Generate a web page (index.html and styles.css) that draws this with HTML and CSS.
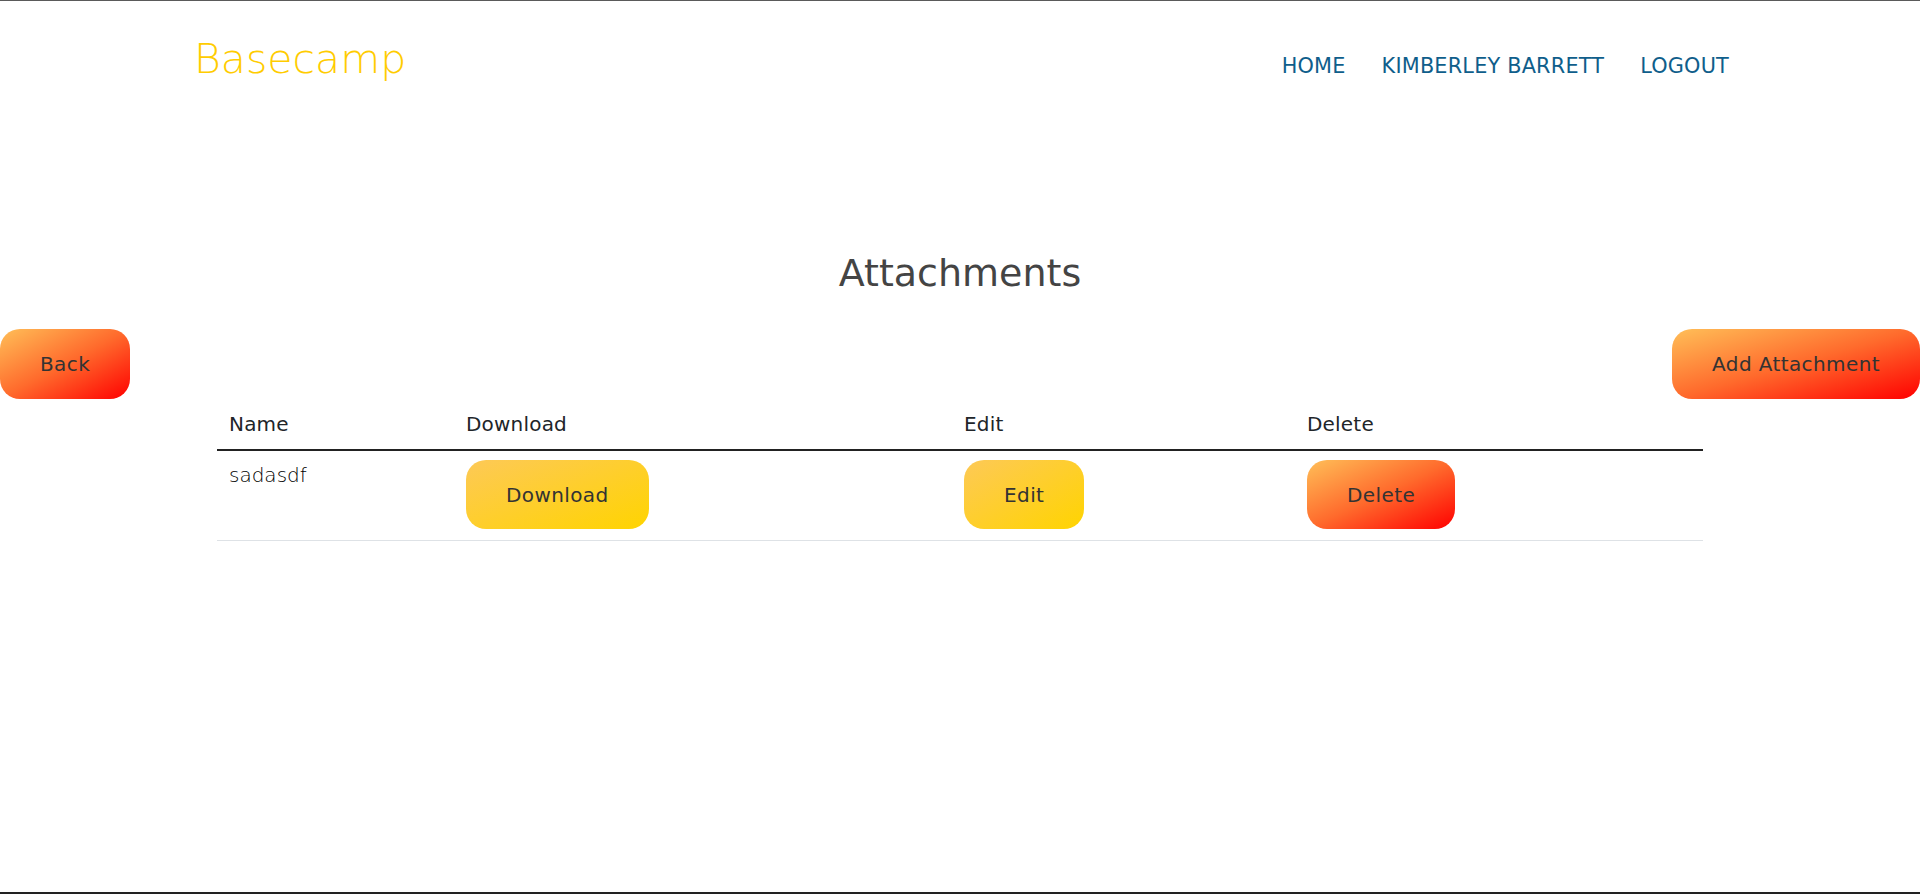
FILE: index.html
```html
<!DOCTYPE html>
<html lang="en">
<head>
<meta charset="utf-8">
<title>Basecamp - Attachments</title>
<link rel="stylesheet" href="styles.css">
</head>
<body>
<div class="page">
  <header class="site-header">
    <a class="brand" href="#">Basecamp</a>
    <nav class="nav">
      <a href="#">HOME</a>
      <a href="#">KIMBERLEY BARRETT</a>
      <a href="#">LOGOUT</a>
    </nav>
  </header>

  <main>
    <h1 class="title">Attachments</h1>
    <div class="actions">
      <a class="btn btn-hot" href="#">Back</a>
      <a class="btn btn-hot" href="#">Add Attachment</a>
    </div>

    <table class="table">
      <colgroup>
        <col class="c1"><col class="c2"><col class="c3"><col class="c4">
      </colgroup>
      <thead>
        <tr><th>Name</th><th>Download</th><th>Edit</th><th>Delete</th></tr>
      </thead>
      <tbody>
        <tr>
          <td class="name">sadasdf</td>
          <td><a class="btn btn-sun" href="#">Download</a></td>
          <td><a class="btn btn-sun" href="#">Edit</a></td>
          <td><a class="btn btn-hot" href="#">Delete</a></td>
        </tr>
      </tbody>
    </table>
  </main>
</div>
</body>
</html>
```

FILE: styles.css
```css
* { box-sizing: border-box; }

html, body {
  margin: 0;
  padding: 0;
  background: #fff;
}

body {
  font-family: "DejaVu Sans", "Liberation Sans", sans-serif;
  color: #212529;
}

a { text-decoration: none; }

.page {
  height: 894px;
  border-top: 1px solid #5a5a5a;
  border-bottom: 2px solid #222;
  overflow: hidden;
}

.site-header {
  width: 1538px;
  margin: 0 auto;
  padding-top: 34px;
  display: flex;
  justify-content: space-between;
  align-items: baseline;
}

.brand {
  margin-left: 3px;
  font-size: 41px;
  line-height: 48px;
  font-weight: 300;
  color: #ffcc00;
}

.nav {
  display: flex;
  gap: 36px;
}

.nav a {
  font-size: 20.8px;
  line-height: 24px;
  letter-spacing: 0.2px;
  color: #0f5e8b;
}

.title {
  margin: 167px 0 0;
  text-align: center;
  font-size: 38px;
  line-height: 46px;
  font-weight: 400;
  color: #444;
}

.actions {
  margin-top: 33px;
  display: flex;
  justify-content: space-between;
}

.btn {
  display: inline-flex;
  align-items: center;
  justify-content: center;
  height: 70px;
  padding: 0 40px;
  border-radius: 20px;
  font-size: 20px;
  line-height: 30px;
  letter-spacing: 0.4px;
  color: #333;
  vertical-align: top;
}

.btn-hot {
  background: linear-gradient(to bottom right, #ffbf58, #ff6a2c 50%, #ff0000);
}

.btn-sun {
  background: linear-gradient(to bottom right, #fdc957, #ffd400);
}

.table {
  width: 1486px;
  margin: 0 auto;
  border-collapse: collapse;
  table-layout: fixed;
}

.c1 { width: 237px; }
.c2 { width: 498px; }
.c3 { width: 343px; }
.c4 { width: 408px; }

.table th {
  text-align: left;
  font-weight: 500;
  font-size: 20px;
  line-height: 30px;
  letter-spacing: 0.2px;
  padding: 10px 12px 10px;
  border-bottom: 2px solid #222;
  color: #212529;
}

.table td {
  padding: 9px 12px 11px;
  font-size: 20px;
  line-height: 30px;
  vertical-align: top;
  border-bottom: 1px solid #dee2e6;
}

.table td .btn {
  height: 69px;
}

.table td.name {
  font-weight: 300;
  color: #000;
}
```
